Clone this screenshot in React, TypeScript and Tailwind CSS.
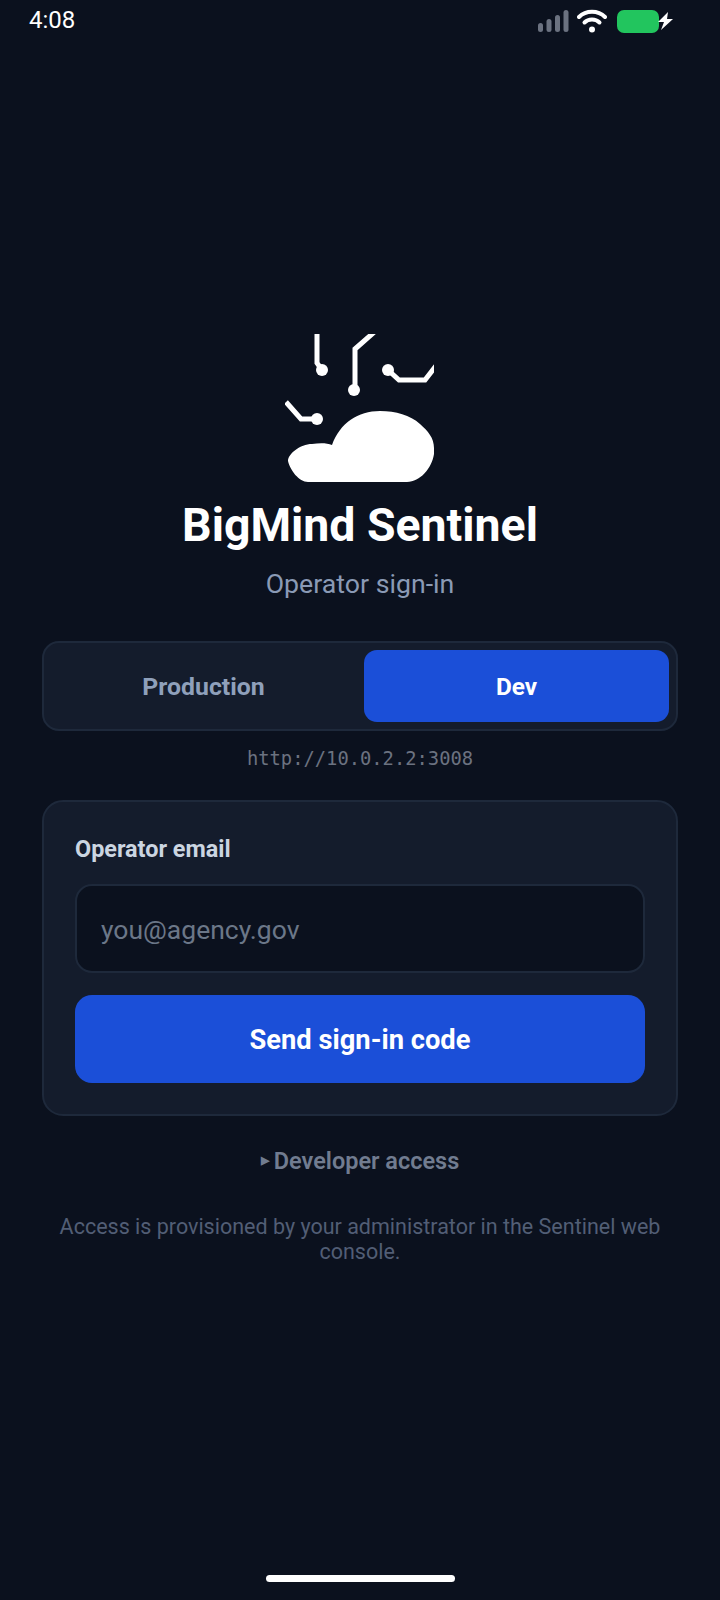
import React from "react";

function Logo() {
  return (
    <svg width="180" height="170" viewBox="0 0 180 170" fill="none" className="block">
      <defs>
        <clipPath id="logo-clip">
          <rect x="15" y="14" width="149" height="150" />
        </clipPath>
      </defs>
      <path d="M18 141 C18 134 30 124 42 124 C50 123 57 123 62 125 C70 103 88 91 110 91 C126 91 140 95 150 104 C158 111 164 118 164 128 L164 134 C162 148 150 162 137 162 L38 162 C29 162 20 150 18 141Z" fill="#fff" />
      <g clipPath="url(#logo-clip)" stroke="#fff" strokeWidth="5" fill="none">
        <path d="M47 5 V43 L52 50" />
        <path d="M110 7 L85 29 V70" />
        <path d="M118 50 L129 60 H155 L172 38" />
        <path d="M16 82 L31 99 H47" />
      </g>
      <g fill="#fff">
        <circle cx="52" cy="50" r="6" />
        <circle cx="84" cy="70" r="6" />
        <circle cx="118" cy="50" r="6" />
        <circle cx="47" cy="99" r="6" />
      </g>
    </svg>
  );
}

function StatusIcons() {
  return (
    <div className="mt-[2px] flex items-center">
      <svg width="32" height="24" viewBox="0 0 32 24" fill="#6b7280" className="mr-[7px]">
        <rect x="0" y="14" width="5" height="9" rx="2.5" />
        <rect x="8.5" y="10" width="5" height="13" rx="2.5" />
        <rect x="17" y="6" width="5" height="17" rx="2.5" />
        <rect x="25.5" y="1" width="5" height="22" rx="2.5" />
      </svg>
      <svg width="30" height="24" viewBox="0 0 30 24" fill="none" stroke="#fff" strokeWidth="4" strokeLinecap="round" className="mr-[10px]">
        <path d="M2 8 C9 1 21 1 28 8" />
        <path d="M7.5 13.5 C11.5 9.5 18.5 9.5 22.5 13.5" />
        <circle cx="15" cy="20.5" r="3" fill="#fff" stroke="none" />
      </svg>
      <div className="h-[23px] w-[42px] rounded-[7px] bg-[#22c55e]" />
      <svg width="17" height="20" viewBox="0 0 17 20" fill="#fff" className="-ml-[2px]">
        <path d="M11 1 L1 11 H7 L4 19 L16 8 H10 Z" />
      </svg>
    </div>
  );
}

export default function App() {
  return (
    <div className="relative flex h-[1600px] w-[720px] flex-col bg-[#0b111e] font-['Roboto',sans-serif]">
      <div className="flex h-[40px] items-center justify-between pl-[29px] pr-[46px]">
        <span className="text-[24px] leading-none text-white">4:08</span>
        <StatusIcons />
      </div>

      <div className="flex flex-col items-center px-[42px] pt-[280px]">
        <Logo />
        <h1 className="mt-[9px] text-[46.4px] font-bold leading-[52px] text-white">BigMind Sentinel</h1>
        <p className="mt-[18px] text-[26.7px] leading-[30px] text-[#8a9ab5]">Operator sign-in</p>

        <div className="mt-[42px] flex h-[90px] w-full gap-[8px] rounded-[17px] border-2 border-[#1e293b] bg-[#141c2c] p-[7px]">
          <div className="flex flex-1 items-center justify-center pt-[2px] text-[24.8px] font-bold text-[#8fa0bb]">Production</div>
          <div className="flex flex-1 items-center justify-center rounded-[13px] bg-[#1b4fd8] pt-[2px] text-[24.4px] font-bold text-white">Dev</div>
        </div>

        <p className="mt-[16px] font-['DejaVu_Sans_Mono',monospace] text-[18.8px] leading-[24px] text-[#6b7280]">http://10.0.2.2:3008</p>

        <div className="mt-[29px] flex h-[316px] w-full flex-col rounded-[21px] border-2 border-[#1e293b] bg-[#141c2c] px-[31px] pt-[34px]">
          <label className="text-[23.4px] font-bold leading-[26px] text-[#cbd5e1]">Operator email</label>
          <div className="mt-[22px] flex h-[89px] items-center rounded-[17px] border-2 border-[#1e293b] bg-[#0b111e] px-[24px] pt-[3px] text-[26.5px] text-[#6b7788]">you@agency.gov</div>
          <button className="mt-[22px] h-[88px] rounded-[17px] bg-[#1b4fd8] pt-[2px] text-[27.3px] font-bold text-white">Send sign-in code</button>
        </div>

        <p className="mt-[31px] flex items-center text-[23.5px] font-semibold leading-[28px] text-[#717c90]">
          <span className="mr-[5px] text-[11px]">▶</span>Developer access
        </p>

        <p className="mt-[39px] px-[10px] text-center text-[21.5px] leading-[25px] text-[#525e75]">
          Access is provisioned by your administrator in the Sentinel web console.
        </p>
      </div>

      <div className="absolute bottom-[18px] left-[266px] h-[7px] w-[189px] rounded-full bg-white" />
    </div>
  );
}
